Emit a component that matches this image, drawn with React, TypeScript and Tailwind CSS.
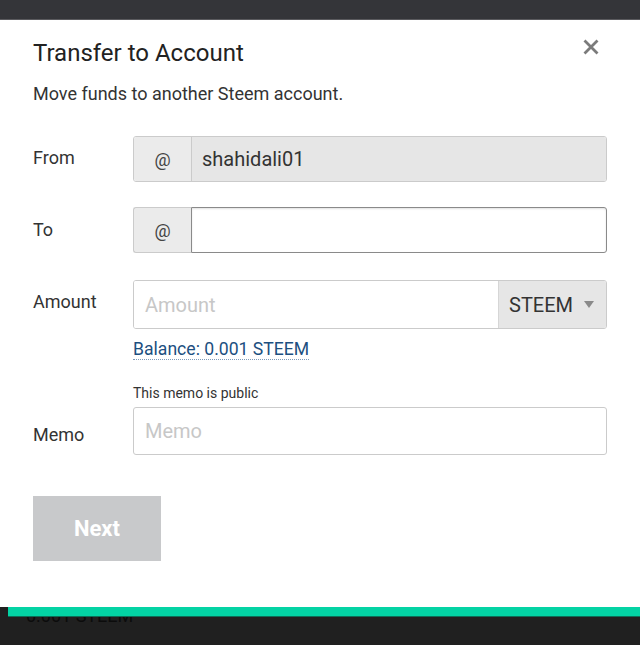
import React from "react";

export default function App() {
  return (
    <div
      className="w-[640px] h-[645px] bg-[#202020] flex flex-col overflow-hidden"
      style={{ fontFamily: "Roboto, 'Liberation Sans', sans-serif" }}
    >
      <div className="h-[20px] bg-[#343539] border-b border-[#5a5a5e] shrink-0" />
      <div className="relative bg-white h-[587px] shrink-0 px-[33px] pt-[19px] z-10">
        <button className="absolute top-[19px] right-[41px] w-[16px] h-[16px]" aria-label="close">
          <svg viewBox="0 0 16 16" width="16" height="16">
            <path d="M1.5 1.5 L14.5 14.5 M14.5 1.5 L1.5 14.5" stroke="#7b7b7b" strokeWidth="2.8" strokeLinecap="butt" />
          </svg>
        </button>
        <h2 className="text-[24px] leading-[29px] text-[#222] font-normal">Transfer to Account</h2>
        <p className="mt-[15px] text-[18px] leading-[21px] text-[#333]">Move funds to another Steem account.</p>

        {/* From */}
        <div className="flex mt-[32px]">
          <div className="w-[100px] shrink-0 pt-[11px] text-[18px] leading-[21px] text-[#333]">From</div>
          <div className="flex-1 flex h-[46px] border border-[#cbcbcb] rounded-[3px] overflow-hidden">
            <div className="w-[58px] shrink-0 flex items-center justify-center bg-[#ebebeb] border-r border-[#cbcbcb] text-[18px] text-[#444]">@</div>
            <div className="flex-1 flex items-center bg-[#e6e6e6] pl-[10px] text-[20px] text-[#333]">shahidali01</div>
          </div>
        </div>

        {/* To */}
        <div className="flex mt-[25px]">
          <div className="w-[100px] shrink-0 pt-[12px] text-[18px] leading-[21px] text-[#333]">To</div>
          <div className="flex-1 flex h-[46px]">
            <div className="w-[58px] shrink-0 flex items-center justify-center bg-[#ebebeb] border border-r-0 border-[#cbcbcb] rounded-l-[3px] text-[18px] text-[#444]">@</div>
            <div className="flex-1 bg-white border-[1.5px] border-[#8a8a8a] rounded-r-[3px] shadow-[inset_0_1px_2px_rgba(0,0,0,0.12)]" />
          </div>
        </div>

        {/* Amount */}
        <div className="flex mt-[27px]">
          <div className="w-[100px] shrink-0 pt-[11px] text-[18px] leading-[21px] text-[#333]">Amount</div>
          <div className="flex-1">
            <div className="flex h-[49px] border border-[#cbcbcb] rounded-[3px] overflow-hidden">
              <div className="flex-1 flex items-center bg-white pl-[11px] text-[20px] text-[#c7c7c7]">Amount</div>
              <div className="w-[108px] shrink-0 flex items-center bg-[#e6e6e6] border-l border-[#d6d6d6] pl-[10px] text-[20px] text-[#333]">
                <span>STEEM</span>
                <svg className="ml-[11px]" width="10" height="7" viewBox="0 0 10 7">
                  <path d="M0 0 L10 0 L5 7 Z" fill="#8a8a8a" />
                </svg>
              </div>
            </div>
            <div className="mt-[10px] text-[17.6px] leading-[21px]">
              <span className="text-[#1c4f80] border-b border-dotted border-[#7f9bb8]">Balance: 0.001 STEEM</span>
            </div>
          </div>
        </div>

        {/* Memo */}
        <div className="flex mt-[25px]">
          <div className="w-[100px] shrink-0 pt-[39px] text-[18px] leading-[21px] text-[#333]">Memo</div>
          <div className="flex-1">
            <div className="text-[14px] leading-[17px] text-[#333]">This memo is public</div>
            <div className="mt-[5px] h-[48px] flex items-center border border-[#cbcbcb] rounded-[3px] pl-[11px] text-[20px] text-[#c7c7c7] bg-white">Memo</div>
          </div>
        </div>

        <button className="mt-[41px] w-[128px] h-[65px] bg-[#c8c9cb] text-white text-[22px] font-bold">Next</button>
      </div>
      <div className="relative flex-1">
        <div className="relative z-10 ml-[8px] h-[10px] bg-[#03d3a4] border-b border-[#0b6e57]" />
        <div className="-mt-[12px] ml-[26px] text-[18px] leading-[21px] text-[#0c0c0c]">0.001 STEEM</div>
      </div>
    </div>
  );
}
